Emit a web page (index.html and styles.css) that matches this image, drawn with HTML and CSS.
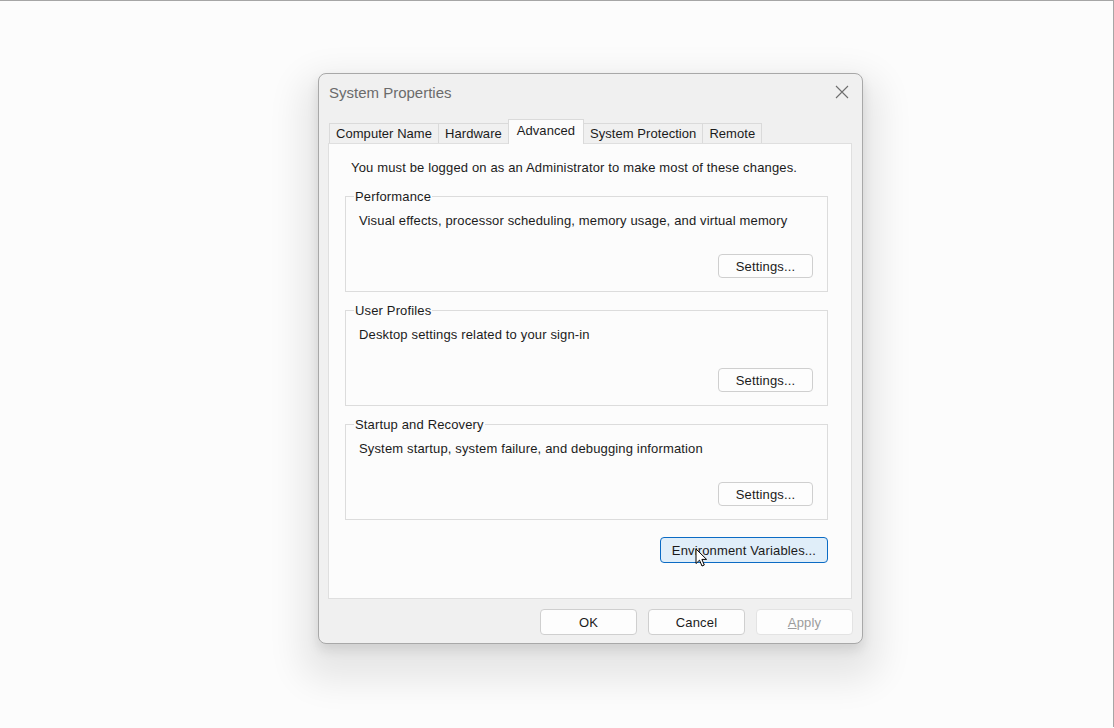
FILE: index.html
```html
<!DOCTYPE html>
<html>
<head>
<meta charset="utf-8">
<title>System Properties</title>
<link rel="stylesheet" href="styles.css">
</head>
<body>
<div class="desktop">
  <div class="dialog">
    <div class="titlebar">
      <span class="title">System Properties</span>
      <span class="close">
        <svg width="14" height="14" viewBox="0 0 14 14"><path d="M1 1 L13 13 M13 1 L1 13" stroke="#6e6e6e" stroke-width="1.1" fill="none"/></svg>
      </span>
    </div>
    <div class="tabs">
      <div class="tab">Computer Name</div>
      <div class="tab">Hardware</div>
      <div class="tab active">Advanced</div>
      <div class="tab">System Protection</div>
      <div class="tab">Remote</div>
    </div>
    <div class="panel">
      <p class="notice">You must be logged on as an Administrator to make most of these changes.</p>
      <div class="group">
        <span class="group-title">Performance</span>
        <p class="desc">Visual effects, processor scheduling, memory usage, and virtual memory</p>
        <div class="group-actions"><button class="btn">Settings...</button></div>
      </div>
      <div class="group">
        <span class="group-title">User Profiles</span>
        <p class="desc">Desktop settings related to your sign-in</p>
        <div class="group-actions"><button class="btn">Settings...</button></div>
      </div>
      <div class="group">
        <span class="group-title">Startup and Recovery</span>
        <p class="desc">System startup, system failure, and debugging information</p>
        <div class="group-actions"><button class="btn">Settings...</button></div>
      </div>
      <div class="env-row">
        <button class="btn btn-env">Environment Variables...
          <svg class="cursor" width="14" height="20" viewBox="0 0 14 20"><path d="M1 1 L1 15.5 L4.5 12.2 L7 18 L9.3 17 L6.9 11.4 L11.6 11.4 Z" fill="#fff" stroke="#000" stroke-width="1" stroke-linejoin="round"/></svg>
        </button>
      </div>
    </div>
    <div class="footer">
      <button class="btn btn-foot">OK</button>
      <button class="btn btn-foot">Cancel</button>
      <button class="btn btn-foot disabled"><u>A</u>pply</button>
    </div>
  </div>
</div>
</body>
</html>
```
FILE: styles.css
```css
html, body {
  margin: 0;
  padding: 0;
}
body {
  background: #fcfcfc;
  font-family: "Liberation Sans", Arial, sans-serif;
  font-size: 13px;
  letter-spacing: 0.15px;
  color: #1b1b1b;
}
.desktop {
  height: 727px;
  border-top: 1px solid #a6a6a6;
  border-right: 1px solid #a6a6a6;
  padding: 72px 0 0 318px;
  box-sizing: border-box;
}
.dialog {
  width: 545px;
  height: 571px;
  box-sizing: border-box;
  background: #f0f0f0;
  border: 1px solid #a8a8a8;
  border-radius: 8px;
  box-shadow: 0 20px 36px 16px rgba(0,0,0,0.09), 0 6px 12px rgba(0,0,0,0.1);
  display: flex;
  flex-direction: column;
}
.titlebar {
  height: 45px;
  display: flex;
  align-items: flex-start;
  justify-content: space-between;
  padding: 9px 12px 0 10px;
  box-sizing: border-box;
}
.title {
  font-size: 15px;
  letter-spacing: 0;
  color: #6b6b6b;
  line-height: 20px;
}
.close {
  display: flex;
  margin-top: 2px;
  margin-right: 1px;
}
.tabs {
  display: flex;
  align-items: flex-end;
  margin-left: 10px;
  height: 24px;
  position: relative;
  z-index: 2;
}
.tab {
  height: 20px;
  line-height: 20px;
  padding: 0 6px;
  letter-spacing: 0.05px;
  border: 1px solid #dadada;
  border-bottom: none;
  border-right: none;
  background: #f0f0f0;
  box-sizing: border-box;
  color: #1b1b1b;
}
.tab:nth-child(4) {
  border-left: none;
}
.tab:last-child {
  border-right: 1px solid #dadada;
}
.tab.active {
  height: 25px;
  line-height: 22px;
  background: #fcfcfc;
  border-right: 1px solid #dadada;
  margin-bottom: -1px;
  padding: 0 8px;
}
.panel {
  margin: 0 10px 0 9px;
  height: 456px;
  box-sizing: border-box;
  background: #fcfcfc;
  border: 1px solid #dfdfdf;
  padding: 15px 23px 0 16px;
  display: flex;
  flex-direction: column;
}
.notice {
  margin: 0 0 19px 6px;
  line-height: 18px;
}
.group {
  margin: 0 0 18px 0;
  border: 1px solid #dcdcdc;
  padding: 0 14px 13px 13px;
  height: 96px;
  box-sizing: border-box;
  display: flex;
  flex-direction: column;
}
.group-title {
  align-self: flex-start;
  margin: -7px 0 0 -5px;
  padding: 0 1px;
  line-height: 14px;
  background: #fcfcfc;
}
.desc {
  margin: 8px 0 0 0;
  line-height: 18px;
}
.group-actions {
  margin-top: auto;
  display: flex;
  justify-content: flex-end;
}
.btn {
  font-family: "Liberation Sans", Arial, sans-serif;
  font-size: 13px;
  letter-spacing: 0.15px;
  color: #1b1b1b;
  background: #fdfdfd;
  border: 1px solid #cfcfcf;
  border-radius: 4px;
  height: 24px;
  width: 95px;
  padding: 0;
}
.env-row {
  display: flex;
  justify-content: flex-end;
  margin-top: -1px;
}
.btn-env {
  width: 168px;
  height: 26px;
  background: #e0eef9;
  border-color: #0b6bc4;
  position: relative;
}
.cursor {
  position: absolute;
  left: 34px;
  top: 10px;
}
.footer {
  display: flex;
  justify-content: flex-end;
  gap: 11px;
  padding: 10px 9px 0 0;
}
.btn-foot {
  width: 97px;
  height: 26px;
}
.btn.disabled {
  color: #9c9c9c;
  border-color: #e3e3e3;
}
```
